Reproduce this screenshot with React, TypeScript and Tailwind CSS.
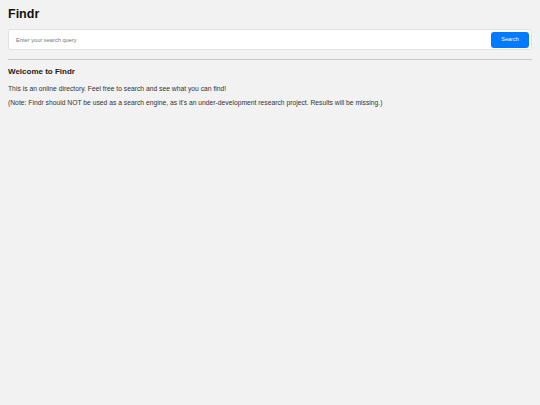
export default function App() {
  return (
    <div className="min-h-screen bg-[#f2f2f2] p-2 font-['Liberation_Sans',Arial,sans-serif] text-[#333]">
      <h1 className="text-[12.5px] font-bold leading-[12px] text-[#111]">Findr</h1>

      <div className="mt-[9px] flex h-[21px] items-center rounded-[3px] border border-[#e2e2e2] bg-white pl-[7px] pr-[2px]">
        <input
          type="text"
          placeholder="Enter your search query"
          className="h-full flex-1 bg-transparent text-[5.7px] text-[#333] outline-none placeholder:text-[#777]"
        />
        <button className="h-[16px] w-[38px] rounded-[3px] bg-[#007bff] text-[5.5px] text-white">
          Search
        </button>
      </div>

      <hr className="mt-[9px] border-t border-[#c8c8c8]" />

      <h2 className="mt-[8px] text-[8px] font-bold leading-[8px] text-[#222]">Welcome to Findr</h2>
      <p className="mt-[9px] text-[6.75px] leading-[7px]">
        This is an online directory. Feel free to search and see what you can find!
      </p>
      <p className="mt-[7px] text-[6.75px] leading-[7px]">
        (Note: Findr should NOT be used as a search engine, as it's an under-development research project. Results will be missing.)
      </p>
    </div>
  )
}
